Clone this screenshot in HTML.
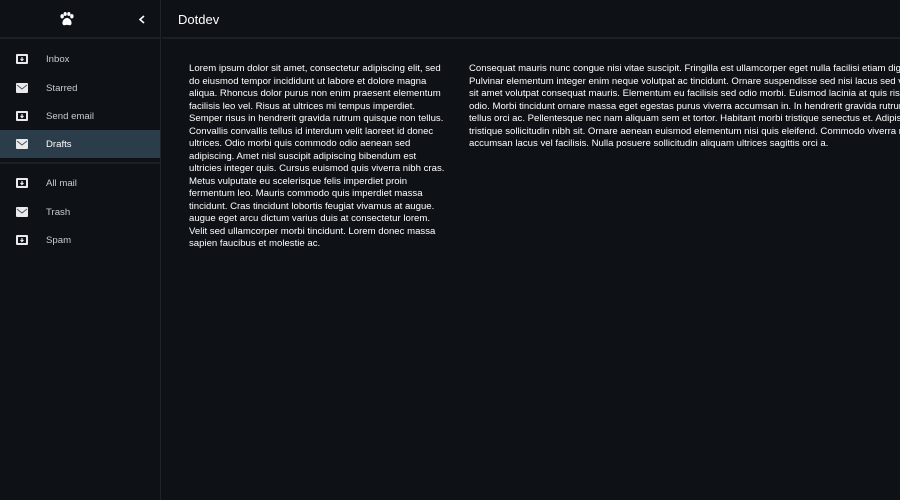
<!DOCTYPE html>
<html><head><meta charset="utf-8"><style>
*{margin:0;padding:0;box-sizing:border-box}
html,body{width:900px;height:500px;overflow:hidden;background:#0e1115;font-family:"Liberation Sans",sans-serif;color:#fff}
.side{position:absolute;left:0;top:0;width:161px;height:500px;border-right:1px solid #1f2429;background:#0e1115}
.sh{height:39px;border-bottom:2px solid #1b2025;position:relative}
.item{position:absolute;left:0;width:160px;height:28px;font-size:9.6px;color:#c8ccd2}
.item span{position:absolute;left:46px;top:9px}
.item.act{background:#2b3c4a;color:#fff}
.ic{position:absolute;left:16px;top:9px;width:12px;height:10px;background:#e8eaee;border-radius:1px}
.main{position:absolute;left:162px;top:0;right:0;height:39px;border-bottom:2px solid #1b2025}
.title{position:absolute;left:178px;top:12px;font-size:13px}
.col{position:absolute;top:63px;font-size:9.6px;line-height:12.5px}
.r div{white-space:nowrap}
</style></head><body>
<div class="side">
<div class="sh">
<svg style="position:absolute;left:59px;top:12px" width="16" height="14" viewBox="0 0 14 13"><ellipse cx="2.5" cy="4" rx="1.6" ry="2" fill="#fff"/><ellipse cx="11.5" cy="4" rx="1.6" ry="2" fill="#fff"/><ellipse cx="5.3" cy="1.8" rx="1.5" ry="1.8" fill="#fff"/><ellipse cx="8.7" cy="1.8" rx="1.5" ry="1.8" fill="#fff"/><path d="M7 5.5C4 5.5 2 9.5 3 11.5C4 13 6 12 7 12C8 12 10 13 11 11.5C12 9.5 10 5.5 7 5.5Z" fill="#fff"/></svg>
<svg style="position:absolute;left:138px;top:15px" width="8" height="9" viewBox="0 0 8 9"><path d="M6 1L2 4.5L6 8" stroke="#fff" stroke-width="1.6" fill="none"/></svg>
</div>
<div class="item" style="top:45px"><div class="ic"><svg width="12" height="10"><rect x="2" y="2" width="8" height="6" fill="#0e1115"/><path d="M6 3v3M4.5 5L6 6.5L7.5 5" stroke="#e8eaee" stroke-width="1.2" fill="none"/></svg></div><span>Inbox</span></div>
<div class="item" style="top:74px"><div class="ic"><svg width="12" height="10"><path d="M1 2L6 6L11 2" stroke="#555" stroke-width="1" fill="none"/></svg></div><span>Starred</span></div>
<div class="item" style="top:102px"><div class="ic"><svg width="12" height="10"><rect x="2" y="2" width="8" height="6" fill="#0e1115"/><path d="M6 3v3M4.5 5L6 6.5L7.5 5" stroke="#e8eaee" stroke-width="1.2" fill="none"/></svg></div><span>Send email</span></div>
<div class="item act" style="top:130px"><div class="ic"><svg width="12" height="10"><path d="M1 2L6 6L11 2" stroke="#555" stroke-width="1" fill="none"/></svg></div><span>Drafts</span></div>
<div style="position:absolute;left:0;top:162px;width:160px;height:2px;background:#1b2025"></div>
<div class="item" style="top:169px"><div class="ic"><svg width="12" height="10"><rect x="2" y="2" width="8" height="6" fill="#0e1115"/><path d="M6 3v3M4.5 5L6 6.5L7.5 5" stroke="#e8eaee" stroke-width="1.2" fill="none"/></svg></div><span>All mail</span></div>
<div class="item" style="top:198px"><div class="ic"><svg width="12" height="10"><path d="M1 2L6 6L11 2" stroke="#555" stroke-width="1" fill="none"/></svg></div><span>Trash</span></div>
<div class="item" style="top:226px"><div class="ic"><svg width="12" height="10"><rect x="2" y="2" width="8" height="6" fill="#0e1115"/><path d="M6 3v3M4.5 5L6 6.5L7.5 5" stroke="#e8eaee" stroke-width="1.2" fill="none"/></svg></div><span>Spam</span></div>
</div>
<div class="main"></div>
<div class="title">Dotdev</div>
<div class="col r" style="left:189px">
<div>Lorem ipsum dolor sit amet, consectetur adipiscing elit, sed</div>
<div>do eiusmod tempor incididunt ut labore et dolore magna</div>
<div>aliqua. Rhoncus dolor purus non enim praesent elementum</div>
<div>facilisis leo vel. Risus at ultrices mi tempus imperdiet.</div>
<div>Semper risus in hendrerit gravida rutrum quisque non tellus.</div>
<div>Convallis convallis tellus id interdum velit laoreet id donec</div>
<div>ultrices. Odio morbi quis commodo odio aenean sed</div>
<div>adipiscing. Amet nisl suscipit adipiscing bibendum est</div>
<div>ultricies integer quis. Cursus euismod quis viverra nibh cras.</div>
<div>Metus vulputate eu scelerisque felis imperdiet proin</div>
<div>fermentum leo. Mauris commodo quis imperdiet massa</div>
<div>tincidunt. Cras tincidunt lobortis feugiat vivamus at augue.</div>
<div>augue eget arcu dictum varius duis at consectetur lorem.</div>
<div>Velit sed ullamcorper morbi tincidunt. Lorem donec massa</div>
<div>sapien faucibus et molestie ac.</div>
</div>
<div class="col r" style="left:469px">
<div>Consequat mauris nunc congue nisi vitae suscipit. Fringilla est ullamcorper eget nulla facilisi etiam dignissim</div>
<div>Pulvinar elementum integer enim neque volutpat ac tincidunt. Ornare suspendisse sed nisi lacus sed viverra</div>
<div>sit amet volutpat consequat mauris. Elementum eu facilisis sed odio morbi. Euismod lacinia at quis risus sed</div>
<div>odio. Morbi tincidunt ornare massa eget egestas purus viverra accumsan in. In hendrerit gravida rutrum quisque</div>
<div>tellus orci ac. Pellentesque nec nam aliquam sem et tortor. Habitant morbi tristique senectus et. Adipiscing</div>
<div>tristique sollicitudin nibh sit. Ornare aenean euismod elementum nisi quis eleifend. Commodo viverra maecenas</div>
<div>accumsan lacus vel facilisis. Nulla posuere sollicitudin aliquam ultrices sagittis orci a.</div>
</div>
</body></html>
